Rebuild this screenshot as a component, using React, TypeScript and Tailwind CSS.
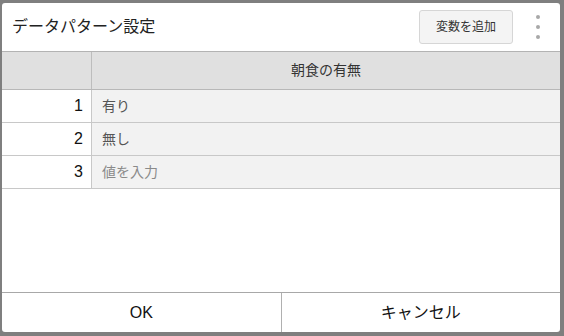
import React from 'react'

const rows = [
  { n: 1, v: '有り', placeholder: false },
  { n: 2, v: '無し', placeholder: false },
  { n: 3, v: '値を入力', placeholder: true },
]

export default function App() {
  return (
    <div
      className="w-[564px] h-[336px] bg-[#7f7f7f] relative overflow-hidden pt-[3px] pl-[2px] pr-[4px] pb-[4px]"
      style={{ fontFamily: '"Liberation Sans", "Noto Sans CJK JP", sans-serif' }}
    >
      <div className="w-full h-full bg-white rounded-[3px] flex flex-col overflow-hidden">
        <div className="h-[49px] flex items-center pl-[10px] pr-[20px] border-b border-[#b3b3b3]">
          <h1 className="text-[16px] text-[#222] flex-1">データパターン設定</h1>
          <button className="h-[34px] w-[94px] text-[12px] text-[#333] bg-[#f4f4f4] border border-[#d6d6d6] rounded-[3px]">
            変数を追加
          </button>
          <div className="ml-[23px] flex flex-col gap-[6px] items-center">
            <span className="w-[4px] h-[4px] rounded-full bg-[#a8a8a8]" />
            <span className="w-[4px] h-[4px] rounded-full bg-[#a8a8a8]" />
            <span className="w-[4px] h-[4px] rounded-full bg-[#a8a8a8]" />
          </div>
        </div>
        <div className="flex h-[38px] bg-[#e0e0e0] border-b border-[#b8b8b8]">
          <div className="w-[90px] border-r border-[#bdbdbd]" />
          <div className="flex-1 flex items-center justify-center text-[14px] text-[#333]">朝食の有無</div>
        </div>
        {rows.map(r => (
          <div key={r.n} className="flex h-[33px] border-b border-[#c8c8c8]">
            <div className="w-[90px] border-r border-[#c8c8c8] flex items-center justify-end pr-[8px] text-[16px] text-[#111]">
              {r.n}
            </div>
            <div className={`flex-1 bg-[#f2f2f2] flex items-center pl-[10px] text-[14px] ${r.placeholder ? 'text-[#8a8a8a]' : 'text-[#555]'}`}>
              {r.v}
            </div>
          </div>
        ))}
        <div className="flex-1" />
        <div className="flex h-[40px] border-t border-[#a8a8a8]">
          <button className="flex-1 border-r border-[#b0b0b0] text-[16px] text-[#111]">OK</button>
          <button className="flex-1 text-[16px] text-[#111]">キャンセル</button>
        </div>
      </div>
    </div>
  )
}
